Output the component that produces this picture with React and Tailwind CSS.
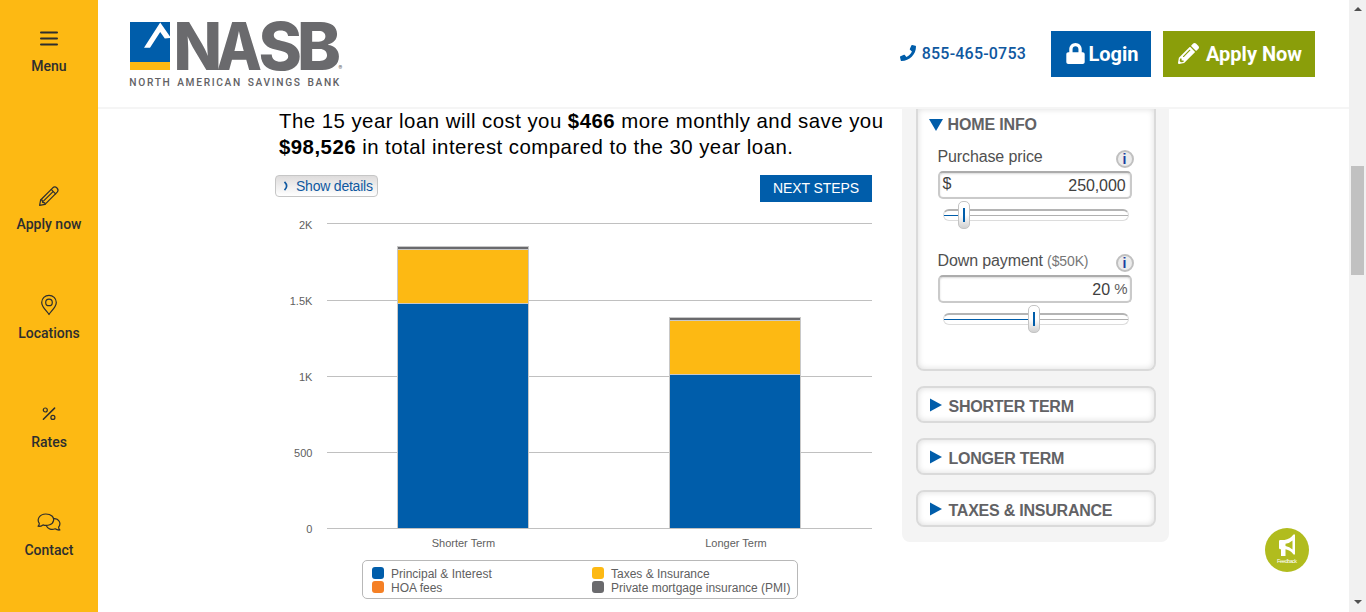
import React from "react";
import { FaPhone, FaLock, FaPencilAlt } from "react-icons/fa";

const stroke = { fill: "none", stroke: "#2d2e2f", strokeLinecap: "round", strokeLinejoin: "round" };

const MenuIcon = () => (
  <svg width="20" height="20" {...stroke} strokeWidth="2">
    <path d="M2 4.500H18M2 10.500H18M2 16.500H18" />
  </svg>
);
const PencilIcon = () => (
  <svg width="22" height="22" {...stroke} strokeWidth="1.2">
    <path d="M1.6 20.4L2.6 15L14.8 2.8Q16.8 1 19 3Q21 5.200 19.200 7.200L7 19.400Z" />
    <path d="M2.600 15L4.200 15.200L4.600 17.400L6.800 17.800L7 19.400M13.200 4.400L17.600 8.800M5.400 16.200L14.800 6.800" />
  </svg>
);
const PinIcon = () => (
  <svg width="22" height="22" {...stroke} strokeWidth="1.2">
    <path d="M11 20.500C9.800 18 3.700 13.200 3.700 8.400A7.300 7.100 0 0 1 18.300 8.400C18.300 13.200 12.200 18 11 20.500Z" />
    <circle cx="11" cy="8.400" r="3.300" />
  </svg>
);
const PercentIcon = () => (
  <svg width="22" height="22" {...stroke} strokeWidth="1.2">
    <circle cx="7.300" cy="7" r="2" />
    <circle cx="14.900" cy="14.400" r="2" />
    <path d="M16.600 5.100L5.400 16.300" strokeWidth="1.500" />
  </svg>
);
const ChatIcon = () => (
  <svg width="24" height="22" {...stroke} strokeWidth="1.2">
    <path d="M1 15.200C2 14.500 2.300 13.500 2.300 12.400C-0.500 8.500 2.400 3 8.800 3C14.500 3 17 6.200 16.600 9.300C16 13.400 10.500 15.400 6 13.900C4.500 15 2.800 15.500 1 15.200Z" />
    <path d="M16.700 7.600C21.500 7.300 24.800 12 21.600 16.200C21.600 17.300 22 18.300 22.900 19C21 19.200 19.400 18.700 18.200 17.800C14 19.200 10.500 17.600 9.200 14.600" />
  </svg>
);

const NavItem = ({ icon, label, className }) => (
  <a className={"flex w-full flex-col items-center font-[Roboto,sans-serif] text-[14px] leading-[18px] font-medium text-[#2d2e2f] " + className}>
    <span className="flex h-[22px] items-center">{icon}</span>
    <span className="mt-[8px]">{label}</span>
  </a>
);

const letters = [
  ["N", 173.500, 48.500],
  ["A", 216.500, 45.500],
  ["S", 258.500, 43.500],
  ["B", 297, 44],
];

const Logo = () => (
  <svg className="overflow-visible" width="218" height="70" viewBox="128 19 218 70">
    <path fill="#005daa" d="M130 22H170V62H130Z" />
    <path fill="#fdb913" d="M130 62H170V70H130Z" />
    <path fill="#fff" d="M144 47.700L160.200 22.500L170 36.500V38L164.800 38.500L160.200 32L150 47.700Z" />
    {letters.map(([c, x, w]) => (
      <text key={c} x={x} y="69.600" textLength={w} lengthAdjust="spacingAndGlyphs" fontFamily="Inter, sans-serif" fontWeight="800" fontSize="65.500" fill="#6a6a6d">{c}</text>
    ))}
    <text x="338.500" y="70" fontFamily="Inter, sans-serif" fontSize="5.500" fill="#6a6a6d">®</text>
    <text x="129.300" y="86" textLength="210" wordSpacing="1.500" fontFamily="Roboto, sans-serif" fontWeight="500" fontSize="10.200" fill="#626265">NORTH AMERICAN SAVINGS BANK</text>
  </svg>
);

const Header = () => (
  <header className="flex h-[109px] shrink-0 items-start border-b-2 border-[#f5f5f5] bg-white font-[Roboto,sans-serif]">
    <div className="mt-[19px] ml-[30px]"><Logo /></div>
    <div className="mr-[34px] ml-auto flex items-center pt-[31px]">
      <FaPhone className="mr-[6px] -mt-[2px] size-4 text-[#005daa]" />
      <span className="mr-[25px] text-[16px] font-medium tracking-[0.200px] text-[#0f58a0]">855-465-0753</span>
      <a className="mr-[12px] flex h-[46px] w-[100px] items-center justify-center gap-[3px] bg-[#005daa] pl-[3px] text-[20px] font-bold text-white">
        <FaLock className="-mt-[2px] h-[21px] w-[19px]" />Login
      </a>
      <a className="flex h-[46px] w-[152px] items-center justify-center gap-[7px] bg-[#8a9e0a] pl-[2px] text-[20px] font-bold text-white">
        <FaPencilAlt className="-mt-[2px] size-[21px]" />Apply Now
      </a>
    </div>
  </header>
);

const ticks = [["2K", 223], ["1.5K", 300], ["1K", 376], ["500", 452], ["0", 528]];
const bars = [
  { x: 397, top: 246, tax: 303, label: "Shorter Term", lx: 463.400 },
  { x: 669, top: 317, tax: 374, label: "Longer Term", lx: 736 },
];

const Chart = () => (
  <svg className="block" width="609" height="350" viewBox="275 206 609 350" fontFamily="'Liberation Sans', Arial, sans-serif" fontSize="11" fill="#606060">
    {ticks.map(([t, y]) => (
      <g key={t}>
        <rect x="327" y={y} width="545" height="1" fill="#c0c0c0" />
        <text x="312.400" y={y === 223 ? 229 : y + 5} textAnchor="end">{t}</text>
      </g>
    ))}
    {bars.map((b) => (
      <g key={b.x}>
        <rect x={b.x} y={b.top} width="132" height={528 - b.top} fill="#c8c8c8" />
        <rect x={b.x + 1} y={b.top + 1} width="130" height="2" fill="#6a6a6d" />
        <rect x={b.x + 1} y={b.top + 4} width="130" height={b.tax - b.top - 4} fill="#fdb913" />
        <rect x={b.x + 1} y={b.tax + 1} width="130" height={527 - b.tax} fill="#005daa" />
        <text x={b.lx} y="547" textAnchor="middle">{b.label}</text>
      </g>
    ))}
  </svg>
);

const Key = ({ color, children }) => (
  <div className="flex h-[14px] items-start">
    <span className={"mr-[7px] size-3 shrink-0 rounded-[3px] " + color} />
    <span className="whitespace-nowrap">{children}</span>
  </div>
);

const Summary = () => (
  <section className="flex w-[613px] shrink-0 flex-col">
    <p className="-mt-[1px] pl-[4px] text-[20.400px] leading-[26px] tracking-[0.470px] whitespace-nowrap text-black">
      The 15 year loan will cost you <b>$466</b> more monthly and save you<br />
      <b>$98,526</b> in total interest compared to the 30 year loan.
    </p>
    <div className="mt-[15px] flex w-[597px] items-start justify-between">
      <button className="flex h-[22px] w-[103px] items-center rounded-[4px] border border-[#c6c6c6] bg-linear-to-b from-[#dedcdc] to-white pl-[7px] text-[14px] tracking-[-0.220px] whitespace-nowrap text-[#0f58a0]">
        <svg className="mr-[6px] shrink-0" width="7" height="10" fill="none" stroke="#0f58a0" strokeWidth="1.700"><path d="M1.500 0.800Q5.800 5 1.500 9.200" /></svg>
        Show details
      </button>
      <button className="h-[27px] w-[112px] bg-[#005daa] text-[14px] tracking-[-0.080px] text-white">NEXT STEPS</button>
    </div>
    <div className="mt-[4px]"><Chart /></div>
    <div className="mt-[4px] ml-[87px] grid h-[39px] w-[436px] shrink-0 grid-cols-[220px_1fr] content-start rounded-[5px] border border-[#b8b8b8] pt-[6px] pl-[9px] text-[12px] leading-[14px] text-[#606060]">
      <Key color="bg-[#005daa]">Principal &amp; Interest</Key>
      <Key color="bg-[#fdb913]">Taxes &amp; Insurance</Key>
      <Key color="bg-[#f58025]">HOA fees</Key>
      <Key color="bg-[#6a6a6d]">Private mortgage insurance (PMI)</Key>
    </div>
  </section>
);

const Info = () => (
  <span className="mb-[3px] flex size-[18px] items-center justify-center rounded-full border-2 border-[#c0c0c0] bg-[#ebebeb] text-[14px] leading-none font-bold text-[#1a3fa0]">i</span>
);

const Slider = ({ track, thumb }) => (
  <div className="relative mt-[2px] ml-[5px] flex h-[28px] w-[186px] items-center">
    <div className="h-[12px] w-full rounded-[6px] border border-t-2 border-[#dcdcdc] border-t-[#b4b4b4] bg-white pt-[4px]">
      <div className="h-px bg-[#b0b0b0]"><div className={"h-px bg-[#005daa] " + track} /></div>
    </div>
    <div className={"absolute top-0 flex h-[28px] w-[12px] items-center justify-center rounded-[5px] border border-[#c4c4c4] bg-linear-to-b from-white via-white to-[#d0d0d0] " + thumb}>
      <span className="h-[14px] w-[2px] bg-[#005daa]" />
    </div>
  </div>
);

const card = "w-[240px] border-2 border-[#dadada] bg-white shadow-[inset_0_0_6px_rgba(0,0,0,0.140)] ";
const field = "flex h-[28px] w-[194px] justify-between rounded-[5px] border-2 border-[#cacaca] border-t-[#acacac] bg-white pr-[4px] pl-[3px] text-[16px] leading-[26px] text-[#404040] shadow-[inset_0_1px_2px_rgba(0,0,0,0.150)]";

const Closed = ({ children }) => (
  <div className={card + "mt-[15px] flex h-[37px] items-center rounded-[8px] pl-[12px] text-[16px] font-bold tracking-[-0.230px] text-[#626265]"}>
    <svg className="mt-[1px] mr-[7px]" width="12" height="14"><path d="M0 0.500L12 7L0 13.500Z" fill="#005daa" /></svg>
    <span className="pt-[4px]">{children}</span>
  </div>
);

const row = "flex h-[25px] w-[196px] items-end justify-between text-[16px] tracking-[-0.120px] text-[#505050]";

const Panel = () => (
  <aside className="ml-[14px] flex h-[433px] w-[267px] flex-col items-center rounded-b-[8px] bg-[#f4f4f4]">
    <div className={card + "flex h-[262px] flex-col rounded-b-[8px] border-t-0 pl-[20px]"}>
      <h3 className="-ml-[9px] flex h-[31px] items-center text-[16px] font-bold tracking-[-0.150px] text-[#626265]">
        <svg className="mr-[5px]" width="14" height="12"><path d="M0 0H14L7 12Z" fill="#005daa" /></svg>
        HOME INFO
      </h3>
      <div className={row + " mt-[6px]"}>
        <span className="mb-[3px] leading-[22px]">Purchase price</span>
        <Info />
      </div>
      <div className={field}><span className="-mt-[2px]">$</span><span className="tracking-[-0.100px]">250,000</span></div>
      <Slider track="w-[20px]" thumb="left-[15px]" />
      <div className={row + " mt-[21px]"}>
        <span className="mb-[3px] leading-[22px]">Down payment <span className="text-[14px] text-[#777]">($50K)</span></span>
        <Info />
      </div>
      <div className={field}><span /><span className="-mr-[2px] flex gap-[4px]"><span>20</span><span className="-mt-[1px] text-[15px] text-[#606060]">%</span></span></div>
      <Slider track="w-[90px]" thumb="left-[85px]" />
    </div>
    <Closed>SHORTER TERM</Closed>
    <Closed>LONGER TERM</Closed>
    <Closed>TAXES &amp; INSURANCE</Closed>
  </aside>
);

const Feedback = () => (
  <svg className="absolute top-[528px] left-[1265px]" width="44" height="44">
    <circle cx="22" cy="22" r="22" fill="#b1bc1e" />
    <path fill="#fff" fillRule="evenodd" d="M14 13.200Q14 12 15.200 12H19.500Q25 11 28.500 6.500H30V26.500H28.500Q25.500 22.300 20.500 21.300V28H16V21.200H15Q14 21 14 20ZM20.500 15.800V18Q24.500 18.900 27.500 21.600V12.400Q24.500 15.100 20.500 15.800Z" />
    <text x="12" y="35" textLength="20" fontFamily="'Liberation Sans', sans-serif" fontSize="5.500" fill="#fff">Feedback</text>
  </svg>
);

export default function App() {
  return (
    <div className="relative flex h-[612px] w-[1366px] overflow-hidden bg-white font-['Liberation_Sans',Arial,sans-serif]">
      <nav className="flex w-[98px] shrink-0 flex-col bg-[#fdb913]">
        <NavItem className="mt-[27px]" icon={<MenuIcon />} label="Menu" />
        <NavItem className="mt-[110px]" icon={<PencilIcon />} label="Apply now" />
        <NavItem className="mt-[61px]" icon={<PinIcon />} label="Locations" />
        <NavItem className="mt-[61px]" icon={<PercentIcon />} label="Rates" />
        <NavItem className="mt-[60px]" icon={<ChatIcon />} label="Contact" />
      </nav>
      <div className="flex min-w-0 flex-1 flex-col">
        <Header />
        <main className="flex min-h-0 flex-1 items-start pl-[177px]">
          <Summary />
          <Panel />
        </main>
      </div>
      <div className="flex w-[17px] shrink-0 flex-col items-center bg-[#f1f1f1]">
        <svg className="mt-[6px]" width="8" height="5"><path d="M0 5L4 1L8 5Z" fill="#505050" /></svg>
        <div className="mt-[155px] h-[109px] w-[13px] bg-[#c1c1c1]" />
        <svg className="mt-auto mb-[7px]" width="8" height="5"><path d="M0 0L4 4L8 0Z" fill="#505050" /></svg>
      </div>
      <Feedback />
    </div>
  );
}
